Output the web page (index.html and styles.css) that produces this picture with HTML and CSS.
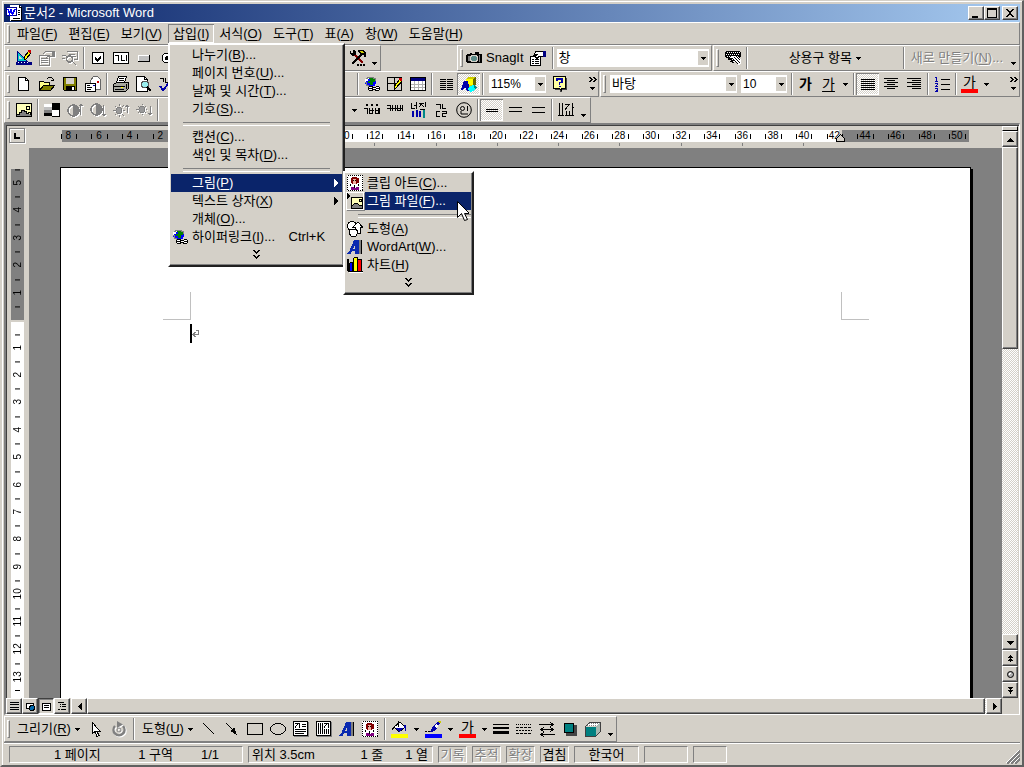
FILE: index.html
```html
<!DOCTYPE html>
<html lang="ko">
<head>
<meta charset="utf-8">
<title>문서2 - Microsoft Word</title>
<link rel="stylesheet" href="styles.css">
</head>
<body>
<svg class="defs" aria-hidden="true">
  <symbol id="caret" viewBox="0 0 5 3"><path d="M0 0h5v1H0zM1 1h3v1H1zM2 2h1v1H2z"/></symbol>
  <symbol id="chev" viewBox="0 0 7 10"><path d="M0 0h2v1h1v1h1V1h1V0h2v1H6v1H5v1H4v1H3V3H2V2H1V1H0zM0 5h2v1h1v1h1V6h1V5h2v1H6v1H5v1H4v1H3V8H2V7H1V6H0z"/></symbol>
  <symbol id="more" viewBox="0 0 8 14"><path d="M0 0h2v1h1v1h1v1H3v1H2v1H0V4h1V3h1V2H1V1H0zM4 0h2v1h1v1h1v1H7v1H6v1H4V4h1V3h1V2H5V1H4zM1 10h5v1H1zM2 11h3v1H2zM3 12h1v1H3z"/></symbol>
  <symbol id="globe" viewBox="0 0 16 16"><circle cx="6.500" cy="6" r="5.500" fill="#00f"/><path d="M5 1h4v2h2v3H9v3H6V7H4V5h2V3H5z" fill="#008000"/><path d="M1 3h2V1h2v2H4v2H2v2H1z" fill="#fff"/><path d="M1 6h1v3h2v2h3M2 2h1V1h6v1h2v3" fill="none" stroke="#808080"/><path d="M5 10h4v1h3v-1h3v1h1v3h-1v1h-4v-1H9v1H5v-1H4v-3h1z" fill="#000"/><path d="M5 11h3v1H5zM5 13h3v1H5zM12 11h3v1h-3zM12 13h3v1h-3zM9 12h3v1H9z" fill="#fff"/></symbol>
  <symbol id="wordart" viewBox="0 0 16 16"><path d="M7 1h5v13h1v1H8v-3H5l-1 3H0v-1l2-1zM8 6L6 10h2z" fill="#0a2ab0" fill-rule="evenodd"/><path d="M12 1h2v14h-2z" fill="#808080"/><path d="M14 1h1v14h-1z"/></symbol>
  <symbol id="clip" viewBox="0 0 16 16"><path d="M0 0h16v16H0z" fill="#fff"/><path d="M.5.500h15v15H.500z" fill="none" stroke="#000" stroke-dasharray="1 1"/><path d="M5 2h5v1h2v5h-2v1H5V8H4V3h1z" fill="#800000"/><path d="M6 4h3v5H6z" fill="#f0b0a0"/><path d="M4 12h3l1 1 1-1h3v3H4z" fill="#800080"/><path d="M6 5h1v1H6zM8 5h1v1H8zM3 9h1v2H3zM11 9h1v2h-1zM7 10h1v3H7z"/></symbol>
  <symbol id="pic" viewBox="0 0 16 16"><path d="M.5 1.500h15v13H.500z" fill="#ffffb8" stroke="#000"/><path d="M1 14v-2h2v-2h2V8h3v2h2v1h2v1h3v2z" fill="#808080"/><path d="M1 12h2v-2h2V8h3v1h2v2h2v-1h2v2h1M10 4h3v3h-3z" fill="none" stroke="#000"/></symbol>
  <symbol id="prop" viewBox="0 0 16 16"><path d="M.5 6.500h10v9H.500z" fill="#fff" stroke="#000"/><path d="M2 9h2v1H2zM5 9h4v1H5zM2 11h2v1H2zM5 11h4v1H5zM2 13h2v1H2zM5 13h4v1H5z"/><path d="M3.500 5.500L6 1.500h7v5h-4l-2 2-2-2 2-2z" fill="#fff" stroke="#000"/><path d="M13 1h3v6h-3z" fill="#000080"/></symbol>
  <symbol id="box3" viewBox="0 0 16 16"><path d="M.5 5.500h10v10H.500z" fill="#008080"/><path d="M1 5l4-4h10l-4 4z" fill="#fff"/><path d="M2 4h9M4 2h9" stroke="#808080" stroke-dasharray="1 1"/><path d="M11 5l4-4v9l-4 5z" fill="#a8b8b0"/><path d="M.5 5.500l4-4h11v9l-5 5H.500z" fill="none" stroke="#404040"/></symbol>
</svg>
<div class="window">
  <header class="title">
    <svg class="i" viewBox="0 0 16 16"><path d="M4 0h9l3 3v13H4z" fill="#fff"/><path d="M13 0h1v2h2v14H5v-1h10V3h-2zM12 5h2v1h-2zM12 7h2v1h-2zM12 9h2v1h-2zM7 13h7v1H7z"/><path d="M0 2h11v9H0z" fill="#fff"/><path d="M.5 2.500h10v8H.500z" fill="none" stroke="#00008b"/><path d="M2 4l1.500 5L5 5l1.500 4L9 4" stroke="#00f" stroke-width="1.500" fill="none"/></svg>
    <h1>문서2 - Microsoft Word</h1>
    <button class="cap" aria-label="최소화"><svg viewBox="0 0 10 10"><path d="M1 8h6v2H1z"/></svg></button>
    <button class="cap" aria-label="최대화"><svg viewBox="0 0 10 10"><path d="M0 0h10v10H0zM1 2v7h8V2z" fill-rule="evenodd"/></svg></button>
    <button class="cap close" aria-label="닫기"><svg viewBox="0 0 10 10"><path d="M1 1h2v1h1v1h2V2h1V1h2v1H8v1H7v1H6v2h1v1h1v1h1v1H7V8H6V7H4v1H3v1H1V8h1V7h1V6h1V4H3V3H2V2H1z"/></svg></button>
  </header>

  <nav class="band menubar">
    <i class="grip"></i>
    <button class="mi first">파일(<u>F</u>)</button>
    <button class="mi">편집(<u>E</u>)</button>
    <button class="mi">보기(<u>V</u>)</button>
    <div class="drop">
      <button class="mi open">삽입(<u>I</u>)</button>
      <ul class="menu">
        <li><button class="row">나누기(<u>B</u>)...</button></li>
        <li><button class="row">페이지 번호(<u>U</u>)...</button></li>
        <li><button class="row">날짜 및 시간(<u>T</u>)...</button></li>
        <li><button class="row">기호(<u>S</u>)...</button></li>
        <li class="line"></li>
        <li><button class="row">캡션(<u>C</u>)...</button></li>
        <li><button class="row">색인 및 목차(<u>D</u>)...</button></li>
        <li class="line"></li>
        <li class="parent"><button class="row on">그림(<u>P</u>)<svg class="arr" viewBox="0 0 4 8"><path d="M0 0l4 4-4 4z"/></svg></button>
          <ul class="menu sub">
            <li><button class="row"><svg class="i" viewBox="0 0 16 16"><use href="#clip"/></svg><span>클립 아트(<u>C</u>)...</span></button></li>
            <li><button class="row hot"><svg class="i lift" viewBox="0 0 16 16"><path d="M4.500 4.500h11v11h-11z" fill="#ffffb8" stroke="#000"/><path d="M5 15v-2l3-3h2l3 3 2-1v3z" fill="#808080"/><path d="M5 13l3-3h2l3 3 2-1M12 6h2v2h-2z" fill="none" stroke="#000"/><path d="M0 0l4 3-4 3z"/></svg><span>그림 파일(<u>F</u>)...</span></button>
              <svg class="cursor" viewBox="0 0 12 20"><path d="M.5.500v16l4-4 3 7 3-1-3-6h5z" fill="#fff" stroke="#000"/></svg></li>
            <li class="line"></li>
            <li><button class="row"><svg class="i" viewBox="0 0 16 16"><circle cx="5" cy="5" r="4.500" fill="#fff" stroke="#000"/><path d="M11 1l4.500 5H13v6H8V6H6z" fill="#fff" stroke="#000"/><path d="M3 8h6l2 3-2 4H4l-2-3z" fill="#fff" stroke="#000"/></svg><span>도형(<u>A</u>)</span></button></li>
            <li><button class="row"><svg class="i" viewBox="0 0 16 16"><use href="#wordart"/></svg><span>WordArt(<u>W</u>)...</span></button></li>
            <li><button class="row"><svg class="i" viewBox="0 0 16 16"><path d="M0 2h2v12h14v1H1v-1H0z"/><path d="M2 6l1-1h3v9H2zM6 1l1-1h4v14H6zM10 3l1-1h4v12h-5z"/><path d="M3 6h2v8H3z" fill="#00f"/><path d="M7 1h3v13H7z" fill="#ff0"/><path d="M11 3h3v11h-3z" fill="#f00"/><path d="M2 15h14v1H2z" fill="#fff"/></svg><span>차트(<u>H</u>)</span></button></li>
            <li><button class="row all" aria-label="확장"><svg class="chev" viewBox="0 0 7 10"><use href="#chev"/></svg></button></li>
          </ul>
        </li>
        <li><button class="row">텍스트 상자(<u>X</u>)<svg class="arr" viewBox="0 0 4 8"><path d="M0 0l4 4-4 4z"/></svg></button></li>
        <li><button class="row">개체(<u>O</u>)...</button></li>
        <li><button class="row ic"><svg class="i" viewBox="0 0 16 16"><use href="#globe"/></svg>하이퍼링크(<u>I</u>)...<kbd>Ctrl+K</kbd></button></li>
        <li><button class="row all" aria-label="확장"><svg class="chev" viewBox="0 0 7 10"><use href="#chev"/></svg></button></li>
      </ul>
    </div>
    <button class="mi">서식(<u>O</u>)</button>
    <button class="mi">도구(<u>T</u>)</button>
    <button class="mi">표(<u>A</u>)</button>
    <button class="mi">창(<u>W</u>)</button>
    <button class="mi">도움말(<u>H</u>)</button>
  </nav>

  <div class="bars">
    <div class="band forms">
      <i class="grip"></i>
      <button class="b" aria-label="디자인 모드"><svg class="i" viewBox="0 0 16 16"><path d="M1 1v10h10z" fill="#0cc" stroke="#000080"/><path d="M3 6v3h3z" fill="#d4d0c8"/><path d="M0 12h16v3H0z" fill="#000080"/><path d="M2 12h1v1H2zM5 12h1v1H5zM8 12h1v1H8zM11 12h1v1h-1z" fill="#fff"/><path d="M8 9V7l5-6 2 2-5 6z" fill="#ff0" stroke="#000"/><path d="M12 0h3v3h-2z" fill="#c00"/></svg></button>
      <button class="b" disabled aria-label="속성"><svg class="i dis" viewBox="0 0 16 16"><path d="M.5 5.500h10v10H.500zM2 8.500h7M2 10.500h7M2 12.500h7M4 4l3-3h6v5H9L7 8" fill="none" stroke="#808080"/><path d="M13 1h3v6h-3z" fill="#808080"/></svg></button>
      <button class="b" disabled aria-label="코드 보기"><svg class="i dis" viewBox="0 0 16 16"><path d="M4.500 1.500h11v8h-4M7 4h6M9 6h5M0 5h4M0 8h3M10 11l4 4" fill="none" stroke="#808080"/><circle cx="7.500" cy="9" r="3" fill="none" stroke="#808080" stroke-width="1.500"/></svg></button>
      <i class="sep"></i>
      <button class="b" aria-label="확인란"><svg class="i" viewBox="0 0 16 16"><path d="M2.500 2.500h11v11h-11z" fill="#fff" stroke="#000"/><path d="M5 7v3l2 2 4-4V5L7 9z"/></svg></button>
      <button class="b" aria-label="입력란"><svg class="i" viewBox="0 0 16 16"><path d="M.5 2.500h15v11H.500z" fill="#fff" stroke="#000"/><path d="M2 5.500h3.500V11M8.500 5v5.500h3M13.500 5v6" fill="none" stroke="#000"/></svg></button>
      <button class="b" aria-label="명령 단추"><svg class="i" viewBox="0 0 16 16"><path d="M2 5h12v7H2z" fill="#c0c0c0"/><path d="M2 5h12v1H3v6H2z" fill="#fff"/><path d="M13 5h1v7H2v-1h11z"/></svg></button>
      <button class="b" aria-label="옵션 단추"><svg class="i" viewBox="0 0 16 16"><circle cx="8" cy="8" r="5" fill="#fff" stroke="#000"/><circle cx="8" cy="8" r="2"/></svg></button>
      <button class="b end" aria-label="추가 컨트롤"><svg class="i" viewBox="0 0 16 16"><path d="M4 4l9 9" stroke="#800000" stroke-width="2"/><path d="M11 5L2 14" stroke="#000" stroke-width="2"/><path d="M0 1h1v2h2V0h1l2 2v3H4v1H2L0 4zM7 1l2-1h4l3 3v4h-2V5h-3L9 3z"/><path d="M9 1h3l2 2h-3z" fill="#cc0"/><path d="M7 14h2v2H7zM10 14h2v2h-2zM13 14h2v2h-2z"/></svg></button>
      <button class="c low" aria-label="옵션"><svg viewBox="0 0 5 3"><use href="#caret"/></svg></button>
    </div>
    <div class="band snag">
      <i class="grip"></i>
      <button class="t"><svg class="i" viewBox="0 0 16 16"><path d="M1 4h3V3h2v1h3V2h4v2h2l1 1v8H1L0 12V5z"/><circle cx="8" cy="8.500" r="3.500" fill="#5a8a88" stroke="#d4d0c8"/><path d="M2 6h2v5H2zM13 5h1v7h-1z" fill="#808080"/></svg> SnagIt</button>
      <button class="b" aria-label="속성"><svg class="i" viewBox="0 0 16 16"><use href="#prop"/></svg></button>
      <i class="sep"></i>
      <label class="combo grow"><select aria-label="입력"><option>창</option></select><i class="dd"><svg viewBox="0 0 5 3"><use href="#caret"/></svg></i></label>
    </div>
    <div class="band auto">
      <i class="grip"></i>
      <button class="b" aria-label="상용구"><svg class="i" viewBox="0 0 16 16"><path d="M1 1h14v1h1v5h-1v1H1V7H0V2h1z"/><path d="M2 2.500h13M1 4.500h13M2 6.500h6" stroke="#fff" stroke-dasharray="1 1"/><path d="M4 8l3-2h5l4 4v4l-3 1-3-3-2 1z" fill="#fff"/><path d="M3 8.500h5l-3 1 3 1-2 1 3 1M9 7l6 6M8 9l5 5M11 6l4 4" fill="none" stroke="#000"/></svg></button>
      <i class="sep"></i>
      <button class="t grow">상용구 항목 <svg class="cr" viewBox="0 0 5 3"><use href="#caret"/></svg></button>
      <i class="sep"></i>
      <button class="t off" disabled>새로 만들기(<u>N</u>)...</button>
      <button class="c low" aria-label="옵션"><svg viewBox="0 0 5 3"><use href="#caret"/></svg></button>
    </div>
  </div>

  <div class="bars">
    <div class="band std">
      <i class="grip"></i>
      <button class="b" aria-label="새 문서"><svg class="i" viewBox="0 0 16 16"><path d="M2.500 1.500h7l3 3v10h-10z" fill="#fff" stroke="#000"/><path d="M9.500 1.500v3h3" fill="none" stroke="#000"/></svg></button>
      <button class="b" aria-label="열기"><svg class="i" viewBox="0 0 16 16"><path d="M.5 13.500v-8h4l1 1h5v3" fill="#ff8" stroke="#000"/><path d="M.5 14.500l4-5h11l-4 5z" fill="#808000" stroke="#000"/><path d="M8 3l2-2h2l2 2v2M12 4h3" fill="none" stroke="#000"/></svg></button>
      <button class="b" aria-label="저장"><svg class="i" viewBox="0 0 16 16"><path d="M1.500 1.500h13v13h-12l-1-1z" fill="#808000" stroke="#000"/><path d="M4 2h8v6H4z" fill="#d4d0c8"/><path d="M4 10h9v5H4z"/><path d="M10 11h2v3h-2z" fill="#fff"/></svg></button>
      <button class="b" aria-label="전자 메일"><svg class="i" viewBox="0 0 16 16"><path d="M5.500 4.500l3-4h4l3 3v10h-9z" fill="#fff" stroke="#666"/><path d="M.5 7.500h10v8H.500z" fill="#fff" stroke="#000"/><path d="M2 9h3v1H2zM2 11h5v1H2zM2 13h4v1H2z"/><path d="M12 5h2v2h-2z" fill="#c00"/><path d="M8 9h2v1H8z" fill="#00a"/></svg></button>
      <i class="sep"></i>
      <button class="b" aria-label="인쇄"><svg class="i" viewBox="0 0 16 16"><path d="M5.500.500h8l-2 6h-8z" fill="#fff" stroke="#000"/><path d="M6 2.500h5M5.500 4.500h5" stroke="#000"/><path d="M.5 8.500l3-2h12v6l-3 3h-12z" fill="#a8a8a0" stroke="#000"/><path d="M1 10h11v1H1zM2 13h9v1H2zM13 8h1v5h-1z"/><path d="M8 11h2v1H8z" fill="#ff0"/></svg></button>
      <button class="b" aria-label="미리 보기"><svg class="i" viewBox="0 0 16 16"><path d="M.5.500h8l3 3v12H.500z" fill="#fff" stroke="#000"/><path d="M8.500.500v3h3" fill="none" stroke="#000"/><circle cx="9" cy="8.500" r="3.500" fill="#9ee" stroke="#555"/><path d="M11 11l4 4" stroke="#000" stroke-width="2"/></svg></button>
      <button class="b" aria-label="맞춤법"><svg class="i" viewBox="0 0 16 16"><path d="M1 2h3v4M6 2v4h3" fill="none" stroke="#000"/><path d="M1 10l3 4 6-7" fill="none" stroke="#00a" stroke-width="2"/></svg></button>
      <i class="sep end"></i>
      <button class="b" aria-label="하이퍼링크"><svg class="i" viewBox="0 0 16 16"><use href="#globe"/></svg></button>
      <button class="b" aria-label="표 및 테두리"><svg class="i" viewBox="0 0 16 16"><path d="M.5 1.500h14v13H.500zM.5 7.500h14M7.500 1.500v13" fill="none" stroke="#000"/><path d="M7 13v-2l6-8 2 2-6 7z" fill="#ff0" stroke="#000"/><path d="M12 2h3v3h-2z" fill="#c00"/></svg></button>
      <button class="b" aria-label="표 삽입"><svg class="i" viewBox="0 0 16 16"><path d="M.5 1.500h15v13H.500z" fill="#fff" stroke="#000"/><path d="M1 2h14v3H1z" fill="#000080"/><path d="M1 8.500h14M1 11.500h14M4.500 5v9M8.500 5v9M12.500 5v9" stroke="#b0b0b0"/></svg></button>
      <i class="sep"></i>
      <button class="b" aria-label="단"><svg class="i" viewBox="0 0 16 16"><path d="M2 3.500h6M2 5.500h6M2 7.500h6M2 9.500h6M2 11.500h6M2 13.500h6M9 3.500h6M9 5.500h6M9 7.500h6M9 9.500h6M9 11.500h6M9 13.500h6" stroke="#000"/></svg></button>
      <button class="b pressed" aria-label="그리기"><svg class="i" viewBox="0 0 16 16"><path d="M5 3l2-2h8v8l-3 2H5z" fill="#cc0"/><path d="M5 3h7v6H5z" fill="#ff0"/><path d="M12 3l3-2v8l-3 2z" fill="#660"/><path d="M0 14L3 5h4l2 10H6l-1-3H3l-1 2z" fill="#00a"/><path d="M8 11l4-2 4 2-2 3-4 2-3-2z" fill="#0ff"/><path d="M13 9l3 2-2 3z" fill="#088"/></svg></button>
      <i class="sep"></i>
      <label class="combo zoom"><select aria-label="확대/축소"><option>115%</option></select><i class="dd"><svg viewBox="0 0 5 3"><use href="#caret"/></svg></i></label>
      <button class="b help" aria-label="도움말"><svg class="i" viewBox="0 0 16 16"><path d="M3 2h12v12h-5v2H8v-2H3z" fill="#444"/><path d="M1.500.500h12v12h-4v2l-2-2h-6z" fill="#ffffa0" stroke="#000"/><path d="M5 5V3h5v3L7.500 7v2M7 10.500h2" fill="none" stroke="#00a" stroke-width="1.500"/></svg></button>
      <button class="c more" aria-label="기타"><svg viewBox="0 0 8 14"><use href="#more"/></svg></button>
    </div>
    <div class="band fmt">
      <i class="grip"></i>
      <label class="combo grow"><select aria-label="글꼴"><option>바탕</option></select><i class="dd"><svg viewBox="0 0 5 3"><use href="#caret"/></svg></i></label>
      <label class="combo size"><select aria-label="글꼴 크기"><option>10</option></select><i class="dd"><svg viewBox="0 0 5 3"><use href="#caret"/></svg></i></label>
      <i class="sep"></i>
      <button class="b g"><b>가</b></button>
      <button class="b g"><u>가</u></button>
      <button class="c" aria-label="밑줄 종류"><svg viewBox="0 0 5 3"><use href="#caret"/></svg></button>
      <i class="sep"></i>
      <button class="b pressed" aria-label="양쪽 맞춤"><svg class="i" viewBox="0 0 16 16"><path d="M1 3.500h14M1 5.500h14M1 7.500h14M1 9.500h14M1 11.500h14M1 13.500h14" stroke="#000"/></svg></button>
      <button class="b" aria-label="가운데 맞춤"><svg class="i" viewBox="0 0 16 16"><path d="M1 2.500h14M4 4.500h8M1 6.500h14M4 8.500h8M1 10.500h14M4 12.500h8" stroke="#000"/></svg></button>
      <button class="b" aria-label="오른쪽 맞춤"><svg class="i" viewBox="0 0 16 16"><path d="M1 2.500h14M6 4.500h9M1 6.500h14M6 8.500h9M1 10.500h14M6 12.500h9" stroke="#000"/></svg></button>
      <i class="sep"></i>
      <button class="b" aria-label="번호 매기기"><svg class="i" viewBox="0 0 16 16"><path d="M7 3.500h9M7 8.500h9M7 13.500h9" stroke="#000"/><path d="M1 1.500h1.500V5M1 5.500h3M1 7.500h2.500v1L1.500 10.500H4M1 12.500h2.500v3H1M1.500 14H3" fill="none" stroke="#00a"/></svg></button>
      <i class="sep"></i>
      <button class="b g ink red">가</button>
      <button class="c" aria-label="글꼴 색"><svg viewBox="0 0 5 3"><use href="#caret"/></svg></button>
      <button class="c more" aria-label="기타"><svg viewBox="0 0 8 14"><use href="#more"/></svg></button>
    </div>
  </div>

  <div class="bars">
    <div class="band pics">
      <i class="grip"></i>
      <button class="b" aria-label="그림 삽입"><svg class="i" viewBox="0 0 16 16"><use href="#pic"/></svg></button>
      <i class="sep"></i>
      <button class="b" aria-label="그림 조절"><svg class="i" viewBox="0 0 16 16"><path d="M0 2h8v3H0z" fill="#fff"/><path d="M0 5h8v3H0z" fill="#c0c0c0"/><path d="M0 8h8v3H0z" fill="#808080"/><path d="M0 11h8v3H0zM8 1h8v7H8z"/><path d="M8 8h7v6H8z" fill="#fff"/><path d="M15 8h1v7H8v-1h7z"/></svg></button>
      <button class="b" disabled aria-label="선명하게"><svg class="i dis" viewBox="0 0 16 16"><circle cx="6.500" cy="8.500" r="5.500" fill="none" stroke="#808080" stroke-width="1.500"/><path d="M6 3a5 5 0 0 1 0 11zM13 4h1v9h-1zM11 4h5l-2-3z" fill="#808080"/></svg></button>
      <button class="b" disabled aria-label="희미하게"><svg class="i dis" viewBox="0 0 16 16"><circle cx="6.500" cy="7.500" r="5.500" fill="none" stroke="#808080" stroke-width="1.500"/><path d="M6 2a5 5 0 0 1 0 11zM13 3h1v9h-1zM11 12h5l-2 3z" fill="#808080"/></svg></button>
      <button class="b" disabled aria-label="밝게"><svg class="i dis" viewBox="0 0 16 16"><circle cx="6" cy="8.500" r="3" fill="#999" stroke="#808080"/><path d="M6 2v2M6 13v2M0 8.500h2M10 8.500h2M2 4l1 1M9 5l2-2M2 13l1-1M9 12l2 2M14 4v7" stroke="#808080"/><path d="M11 5h5l-2-3z" fill="#808080"/></svg></button>
      <button class="b" disabled aria-label="어둡게"><svg class="i dis" viewBox="0 0 16 16"><circle cx="6" cy="7.500" r="3" fill="#999" stroke="#808080"/><path d="M6 2v1M6 12v1M0 7.500h2M10 7.500h1M2 4l1 1M9 5l1-1M2 11l1-1M9 10l1 1M14 4v7" stroke="#808080"/><path d="M11 11h5l-2 3z" fill="#808080"/></svg></button>
      <i class="sep"></i>
      <button class="c end" aria-label="선택"><svg viewBox="0 0 5 3"><use href="#caret"/></svg></button>
      <button class="b" aria-label="강조점"><svg class="i" viewBox="0 0 16 16"><path d="M2 2h2v2H2zM7 2h2v2H7zM12 2h2v2h-2z"/><path d="M0 6.500h3.500V12M5.500 6v5M5.500 8.500h4M8.500 6v5.500H5M11.500 6v5.500h3V6M11.500 8.500h3M15.500 6v6" fill="none" stroke="#000"/></svg></button>
      <button class="b" aria-label="취소선"><svg class="i" viewBox="0 0 16 16"><path d="M0 3.500h3.500V9M5.500 3v6M5.500 6h3M8.500 3v6M10.500 3v5.500h3V3M15.500 3v6M0 6.500h16" fill="none" stroke="#000"/></svg></button>
      <button class="b" aria-label="윗주"><svg class="i" viewBox="0 0 16 16"><path d="M1.500 1v5h3M6.500 0v7M4 3.500h3M9 1.500h5M11.500 2L9 5M12 3l2 2M15.500 0v5M10 7.500h5" fill="none" stroke="#000"/><path d="M2.500 9v6M6.500 8v7M10 9v6" stroke="#00a" stroke-width="2"/><path d="M13.500 8v8" stroke="#088" stroke-width="2"/></svg></button>
      <button class="b" aria-label="글자 균등"><svg class="i" viewBox="0 0 16 16"><path d="M3 2.500h4.500V7M9.500 2v4.500H13M7 9.500H3.500v5H7M9 9.500h4v2H9.500v3H13" fill="none" stroke="#000"/></svg></button>
      <button class="b" aria-label="원 문자"><svg class="i round" viewBox="0 0 16 16"><circle cx="8" cy="8" r="7.300" fill="none" stroke="#000"/><circle cx="6.500" cy="6.500" r="2" fill="none" stroke="#000"/><path d="M11.500 4v5M5 9v3h7" fill="none" stroke="#000"/></svg></button>
      <i class="sep"></i>
      <button class="b pressed" aria-label="가로 선 1"><svg class="i" viewBox="0 0 16 16"><path d="M2 7h12v1H2zM2 9h12v1H2z"/></svg></button>
      <button class="b" aria-label="가로 선 2"><svg class="i" viewBox="0 0 16 16"><path d="M2 5.500h13M2 9.500h13" stroke="#000"/></svg></button>
      <button class="b" aria-label="가로 선 3"><svg class="i" viewBox="0 0 16 16"><path d="M2 5.500h13M2 10.500h13" stroke="#000"/></svg></button>
      <i class="sep"></i>
      <button class="b" aria-label="텍스트 방향"><svg class="i" viewBox="0 0 16 16"><path d="M1.500 1v13M4.500 1v13M7 2.500h4L7 8M8.500 9v5M11.500 9v5M14.500 1v13M14 5h2M0 13h3M3 13h3M7 13h3M10 13h3M13 13h3" fill="none" stroke="#000"/></svg></button>
      <button class="c low" aria-label="옵션"><svg viewBox="0 0 5 3"><use href="#caret"/></svg></button>
    </div>
  </div>

  <main class="doc">
    <div class="corner"><button class="tab" aria-label="탭 종류"><svg viewBox="0 0 6 6"><path d="M0 0h2v4h4v2H0z"/></svg></button></div>
    <div class="hrule">
      <div class="hcells">
        <i>8</i><i>6</i><i>4</i><i>2</i><i></i><i></i><i class="d"></i><i></i><i class="d"></i><i>10</i><i class="d">12</i><i>14</i><i class="d">16</i><i>18</i><i class="d">20</i><i>22</i><i class="d">24</i><i>26</i><i class="d">28</i><i>30</i><i class="d">32</i><i>34</i><i class="d">36</i><i>38</i><i class="d">40</i><i>42<svg class="indent" viewBox="0 0 9 8"><path d="M.5 7.500v-3l4-4 4 4v3z" fill="#d4d0c8" stroke="#000"/></svg></i><i>44</i><i>46</i><i>48</i><i>50</i>
      </div>
    </div>
    <div class="vscroll">
      <button class="split" aria-label="나누기"></button>
      <button class="sb" aria-label="위로"><svg viewBox="0 0 7 4"><path d="M3 0h1v1h1v1h1v1h1v1H0V3h1V2h1V1h1z"/></svg></button>
      <div class="track"><div class="thumb"></div></div>
      <button class="sb" aria-label="아래로"><svg viewBox="0 0 7 4"><path d="M0 0h7v1H6v1H5v1H4v1H3V3H2V2H1V1H0z"/></svg></button>
      <button class="sb" aria-label="이전 페이지"><svg viewBox="0 0 7 7"><path d="M3 0h1v1h1v1h1v1H4v1h1v1h1v1H4v1H3V6H1V5h1V4h1V3H1V2h1V1h1z"/></svg></button>
      <button class="sb" aria-label="찾을 개체"><svg class="round" viewBox="0 0 7 7"><circle cx="3.500" cy="3.500" r="3" fill="#b0b0b0" stroke="#000"/><path d="M2 2h2v1H3v1H2z" fill="#fff"/></svg></button>
      <button class="sb" aria-label="다음 페이지"><svg viewBox="0 0 7 7"><path d="M1 0h5v1H5v1H4v1h2v1H5v1H4v2H3V5H2V4H1V3h2V2H2V1H1z"/></svg></button>
    </div>
    <div class="vrule"><div class="vcells">
      <i>5</i><i>4</i><i>3</i><i>2</i><i>1</i><i></i><i>1</i><i>2</i><i>3</i><i>4</i><i>5</i><i>6</i><i>7</i><i>8</i><i>9</i><i>10</i><i>11</i><i>12</i><i>13</i><i class="last"></i>
    </div></div>
    <div class="desk">
      <article class="page">
        <div class="marks"><i class="ml"></i><i class="mr"></i></div>
        <p class="para"><i class="ibeam"></i><svg viewBox="0 0 7 7"><path d="M6.500 0v4.500H1M3.500 2L1 4.500 3.500 7M4 .5h2" fill="none" stroke="#808080"/></svg></p>
      </article>
    </div>
    <div class="hscroll">
      <button class="sb view" aria-label="기본 보기"><svg viewBox="0 0 9 9"><path d="M0 .5h9M0 2.500h9M0 5.500h9M0 7.500h9" stroke="#000"/></svg></button>
      <button class="sb view" aria-label="웹 모양"><svg viewBox="0 0 9 9"><path d="M.5 1.500h7v5h-7z" fill="#fff" stroke="#000"/><circle cx="6" cy="6" r="2.500" fill="#06a" stroke="#000"/></svg></button>
      <button class="sb view in" aria-label="인쇄 모양"><svg viewBox="0 0 9 9"><path d="M.5 1.500h8v7h-8z" fill="#fff" stroke="#000"/><path d="M2 3.500h5M2 5.500h5" stroke="#000"/></svg></button>
      <button class="sb view" aria-label="개요"><svg viewBox="0 0 9 9"><path d="M0 .5h6M2 2.500h1M4 2.500h4M2 4.500h1M4 4.500h4M0 7.500h2M3 7.500h5" stroke="#000"/></svg></button>
      <button class="sb" aria-label="왼쪽"><svg viewBox="0 0 4 7"><path d="M4 0v7H3V6H2V5H1V4H0V3h1V2h1V1h1V0z"/></svg></button>
      <div class="htrack"><div class="hthumb"></div></div>
      <button class="sb" aria-label="오른쪽"><svg viewBox="0 0 4 7"><path d="M0 0v7h1V6h1V5h1V4h1V3H3V2H2V1H1V0z"/></svg></button>
    </div>
  </main>

  <div class="bars foot">
    <div class="band draw">
      <i class="grip"></i>
      <button class="t">그리기(<u>R</u>) <svg class="cr" viewBox="0 0 5 3"><use href="#caret"/></svg></button>
      <button class="b" aria-label="개체 선택"><svg class="i" viewBox="0 0 16 16"><path d="M4.500 1.500v11l2.500-2 2 5 2-1-2-4h3z" fill="#fff" stroke="#000"/></svg></button>
      <button class="b" disabled aria-label="회전"><svg class="i dis round" viewBox="0 0 16 16"><path d="M4 5a5.500 5.500 0 1 0 8 0" fill="none" stroke="#808080" stroke-width="2.500"/><circle cx="8" cy="9" r="2" fill="none" stroke="#808080"/><path d="M6 0l6 3.500-6 3.500z" fill="#808080"/></svg></button>
      <i class="sep"></i>
      <button class="t">도형(<u>U</u>) <svg class="cr" viewBox="0 0 5 3"><use href="#caret"/></svg></button>
      <button class="b" aria-label="선"><svg class="i" viewBox="0 0 16 16"><path d="M2 2l11 11" stroke="#000"/></svg></button>
      <button class="b" aria-label="화살표"><svg class="i" viewBox="0 0 16 16"><path d="M2 2l8 8" stroke="#000"/><path d="M13 14l-7-4 4-4z"/></svg></button>
      <button class="b" aria-label="직사각형"><svg class="i" viewBox="0 0 16 16"><path d="M.5 2.500h15v11H.500z" fill="none" stroke="#000"/></svg></button>
      <button class="b" aria-label="타원"><svg class="i" viewBox="0 0 16 16"><ellipse cx="8" cy="8" rx="7.500" ry="5.500" fill="none" stroke="#000"/></svg></button>
      <button class="b" aria-label="텍스트 상자"><svg class="i" viewBox="0 0 16 16"><path d="M1 1h15v15H1z" fill="#808080"/><path d="M.5.500h14v14H.500z" fill="#fff" stroke="#000"/><path d="M2 2.500h3L2 6.500M6.500 2v5M9 3.500h4M9 5.500h4M2 8.500h11M2 10.500h11M2 12.500h9" fill="none" stroke="#000"/></svg></button>
      <button class="b" aria-label="세로 텍스트 상자"><svg class="i" viewBox="0 0 16 16"><path d="M1 1h15v15H1z" fill="#808080"/><path d="M.5.500h14v14H.500z" fill="#fff" stroke="#000"/><path d="M2.500 2v11M4.500 2v11M6.500 2v11M8 2.500h3L8 6.500M12.500 2v5M8.500 8v5M10.500 8v5M12.500 8v5" fill="none" stroke="#000"/></svg></button>
      <button class="b" aria-label="WordArt"><svg class="i" viewBox="0 0 16 16"><use href="#wordart"/></svg></button>
      <button class="b" aria-label="클립 아트"><svg class="i" viewBox="0 0 16 16"><use href="#clip"/></svg></button>
      <i class="sep"></i>
      <button class="b ink yellow" aria-label="채우기 색"><svg class="i" viewBox="0 0 16 14"><path d="M3 7l6-5 5 5-6 5z" fill="#fff" stroke="#000"/><path d="M4 8h9l-5 4z" fill="#00a"/><path d="M7.500 1v6M2.500 7l-1 3" stroke="#000"/><path d="M13 5h2v6h-1z" fill="#00a"/></svg></button>
      <button class="c" aria-label="채우기"><svg viewBox="0 0 5 3"><use href="#caret"/></svg></button>
      <button class="b ink blue" aria-label="선 색"><svg class="i" viewBox="0 0 16 14"><path d="M0 11h2v1H0zM3 11h2v1H3z"/><path d="M5 12l2-4 6-7h2v2l-5 8z" fill="#00a"/><path d="M9 6l2-2 2 2-2 2z" fill="#fff"/><path d="M13 1h3v2h-2z" fill="#cc0"/></svg></button>
      <button class="c" aria-label="선"><svg viewBox="0 0 5 3"><use href="#caret"/></svg></button>
      <button class="b g ink red">가</button>
      <button class="c" aria-label="글꼴 색"><svg viewBox="0 0 5 3"><use href="#caret"/></svg></button>
      <button class="b" aria-label="선 스타일"><svg class="i" viewBox="0 0 16 16"><path d="M0 3h16v1H0zM0 6h16v2H0zM0 10h16v3H0z"/></svg></button>
      <button class="b" aria-label="대시 스타일"><svg class="i" viewBox="0 0 16 16"><path d="M0 3.500h16" stroke="#000" stroke-dasharray="1 1"/><path d="M0 6.500h16M0 12.500h16" stroke="#000" stroke-dasharray="3 1"/><path d="M0 9.500h16" stroke="#000" stroke-dasharray="2 1"/></svg></button>
      <button class="b" aria-label="화살표 스타일"><svg class="i" viewBox="0 0 16 16"><path d="M0 3.500h14M2 8.500h12M2 13.500h14M11 1l3 2.500L11 6M5 6L2 8.500 5 11M11 6l3 2.500-3 2.500M5 11l-3 2.500L5 16" fill="none" stroke="#000"/></svg></button>
      <button class="b" aria-label="그림자"><svg class="i" viewBox="0 0 16 16"><path d="M4 4h11v11H4z" fill="#444"/><path d="M2.500 2.500h9v9h-9z" fill="#008080" stroke="#000"/></svg></button>
      <button class="b" aria-label="3차원"><svg class="i" viewBox="0 0 16 16"><use href="#box3"/></svg></button>
      <button class="c low" aria-label="옵션"><svg viewBox="0 0 5 3"><use href="#caret"/></svg></button>
    </div>
  </div>
  <footer class="status">
    <div class="pane p1"><span>1 페이지</span><span class="sec">1 구역</span><span>1/1</span></div>
    <div class="pane p2"><span class="pos">위치 3.5cm</span><span>1 줄</span><span>1 열</span></div>
    <div class="pane s off">기록</div>
    <div class="pane s off">추적</div>
    <div class="pane s off">확장</div>
    <div class="pane s">겹침</div>
    <div class="pane lang">한국어</div>
    <div class="pane e1"></div>
    <div class="pane e2"></div>
    <svg class="size" viewBox="0 0 14 14"><path d="M1 14L14 1M5 14l9-9M9 14l5-5" stroke="#808080" stroke-width="2"/><path d="M0 13L13 0M4 13l9-9M8 13l5-5" stroke="#fff"/></svg>
  </footer>
</div>
</body>
</html>
```

FILE: styles.css
```css
* { box-sizing: border-box; }

:root {
  --face: #d4d0c8;
  --shade: #808080;
  --dark: #404040;
  --navy: #0a246a;
  --dither: repeating-conic-gradient(#fff 0 25%, #d4d0c8 0 50%) 0 0 / 2px 2px;
}

body {
  margin: 0;
  background: var(--face);
  color: #000;
  font: 13px/16px "Liberation Sans", "Noto Sans CJK KR", sans-serif;
}

button, select, kbd { font: inherit; color: inherit; }
button { border: 0; padding: 0; margin: 0; background: none; white-space: nowrap; }
ul { list-style: none; margin: 0; padding: 0; }
i { font-style: normal; }
svg { display: block; flex: none; shape-rendering: crispEdges; }
.defs { position: absolute; width: 0; height: 0; }
.i { width: 16px; height: 16px; }
.round { shape-rendering: auto; }
.dis { filter: drop-shadow(1px 1px 0 #fff); }
u { text-underline-offset: 2px; text-decoration-thickness: 1px; }

.window {
  display: flex;
  flex-direction: column;
  height: 100vh;
  padding: 3px 2px 0 2px;
  border: 1px solid var(--dark);
  border-width: 1px 2px 2px;
  border-color: var(--face) #606060 #606060 var(--face);
  box-shadow: inset 1px 1px 0 #fff;
}

/* title bar */
.title {
  display: flex;
  align-items: center;
  flex: none;
  height: 18px;
  padding: 0 2px;
  background: linear-gradient(90deg, var(--navy), #a6caf0);
  color: #fff;
}
.title h1 { flex: 1; margin: 0 0 0 2px; font-size: 13px; font-weight: 400; line-height: 18px; }
.cap, .sb, .thumb, .hthumb {
  background: var(--face);
  border: 1px solid;
  border-color: #fff var(--dark) var(--dark) #fff;
  box-shadow: inset -1px -1px 0 var(--shade);
}
.cap { display: flex; align-items: center; justify-content: center; width: 16px; height: 14px; }
.cap svg { width: 10px; height: 10px; }
.close { margin-left: 2px; }

/* command bars */
.bars { display: flex; flex: none; gap: 1px; height: 26px; }
.band {
  display: flex;
  flex: none;
  align-items: center;
  height: 26px;
  border: 1px solid;
  border-color: #fff var(--shade) var(--shade) #fff;
}
.grip { flex: none; width: 3px; height: 18px; margin: 0 2px; border: 1px solid; border-color: #fff var(--shade) var(--shade) #fff; }
.sep { flex: none; width: 2px; height: 22px; margin: 0 1px 0 2px; border-left: 1px solid var(--shade); border-right: 1px solid #fff; }
.menubar { gap: 1px; height: 23px; }
.first { margin-left: -1px; }
.mi { height: 19px; padding: 0 5px; line-height: 19px; }
.open { box-shadow: inset 1px 1px 0 var(--shade), inset -1px -1px 0 #fff; }
.drop { position: relative; margin-right: -1px; }

.b { display: flex; flex: none; flex-direction: column; align-items: center; justify-content: center; width: 23px; height: 22px; }
.c { display: flex; flex: none; align-items: center; justify-content: center; width: 11px; height: 22px; }
.c svg, .cr, .dd svg { width: 5px; height: 3px; }
.low { align-items: flex-end; padding-bottom: 4px; }
.t { display: flex; align-items: center; justify-content: center; gap: 4px; height: 22px; padding: 0 5px; }
.t u { margin: 0 -4px; }
.end { margin-left: auto; }
.grow { flex: 1; }
.pressed { background: var(--dither); box-shadow: inset 1px 1px 0 var(--shade), inset -1px -1px 0 #fff; }
.more svg { width: 8px; height: 14px; }
.g { font-size: 14px; line-height: 16px; }
.ink { justify-content: flex-start; width: 17px; height: 18px; margin: 0 3px; border-bottom: 4px solid; line-height: 14px; }
.ink .i { height: 14px; }
.red { border-color: #f00; }
.yellow { border-color: #ff0; }
.blue { border-color: #00f; }
.off, .s.off { color: var(--shade); text-shadow: 1px 1px 0 #fff; }

.combo { display: flex; align-items: center; height: 18px; margin: 0 2px; background: #fff; }
.combo select { flex: 1; min-width: 0; height: 18px; padding: 0 2px; border: 0; background: none; appearance: none; font-size: 13px; line-height: 16px; }
.dd { display: flex; flex: none; align-items: center; justify-content: center; width: 10px; height: 14px; margin-right: 1px; background: var(--face); }
.zoom { width: 57px; margin-left: 4px; }
.zoom select, .size select { font-size: 12px; }
.size { width: 46px; }

.forms { width: 377px; }
.snag { width: 255px; margin-left: auto; }
.snag .t { padding: 0 3px 0 1px; }
.auto { width: 307px; }
.auto .t.off { display: block; }
.off u { margin: 0; }
.std { width: 595px; }
.std .help { margin-right: 16px; }
.fmt { flex: 1; }
.fmt .more { margin-left: 16px; }
.pics { width: 587px; }
.pics .low { width: 13px; }

/* menus */
.menu {
  position: absolute;
  z-index: 5;
  top: 19px;
  left: 0;
  width: 177px;
  padding: 1px;
  background: var(--face);
  border: 2px solid;
  border-color: #fff #202020 #202020 #fff;
  box-shadow: inset -1px -1px 0 var(--shade);
}
.row { display: flex; align-items: center; width: 100%; height: 18px; padding-left: 21px; line-height: 18px; }
.row .arr { width: 4px; height: 8px; margin: 0 4px 0 auto; fill: currentColor; }
.row.ic { padding-left: 1px; }
.ic .i { margin-right: 4px; }
.row kbd { margin: 0 17px 0 auto; }
.all { justify-content: center; padding: 0; }
.chev { width: 7px; height: 10px; }
.line { height: 10px; padding: 4px 12px; }
.line::before { content: ""; display: block; height: 2px; border-top: 1px solid var(--shade); border-bottom: 1px solid #fff; }
.on, .hot span { background: var(--navy); color: #fff; }
.parent, .sub li { position: relative; }
.sub { top: -3px; left: 172px; width: 131px; }
.sub .row { padding: 0; }
.sub .i { margin: 0 1px; }
.sub .row span { flex: 1; margin-left: 1px; padding-left: 2px; text-align: left; }
.sub .line { padding-right: 0; }
.lift { box-shadow: 0 0 0 1px #fff, 1px 1px 0 1px var(--shade); }
.cursor { position: absolute; z-index: 6; top: 9px; left: 111px; width: 12px; height: 20px; shape-rendering: auto; }

/* document area */
.doc {
  display: grid;
  flex: 1;
  grid-template: 23px minmax(0, 1fr) 16px / 23px minmax(0, 1fr) 16px;
  min-height: 0;
  padding-right: 1px;
  border: 2px solid;
  border-color: var(--shade) #fff #fff var(--shade);
  border-right-width: 1px;
  border-bottom-width: 1px;
  box-shadow: inset 1px 1px 0 var(--dark);
}
.corner { padding: 3px; }
.tab { display: flex; align-items: center; justify-content: center; width: 16px; height: 15px; border: 1px solid var(--shade); box-shadow: inset 1px 1px 0 #fff, 1px 1px 0 #fff; }
.tab svg { width: 6px; height: 6px; }
.hrule { padding: 5px 30px 0 24px; }
.hcells {
  display: flex;
  height: 12px;
  background: linear-gradient(90deg, transparent 1%, var(--shade) 1% 14.9%, #fff 14.9% 85.5%, transparent 85.5% 85.9%, var(--shade) 85.9% 99.7%, transparent 99.7%);
  font-size: 10px;
  line-height: 12px;
}
.hcells i { position: relative; flex: 1 1 0; text-align: center; }
.hcells i::before, .hcells i::after { content: ""; position: absolute; top: 4px; left: 25%; width: 1px; height: 5px; background: #000; }
.hcells i::after { left: 75%; }
.d { height: 16px; background: linear-gradient(var(--shade), var(--shade)) center bottom / 1px 3px no-repeat; }
.indent { position: absolute; top: 4px; left: 17px; z-index: 1; width: 9px; height: 8px; }

.vrule { grid-row: 2; grid-column: 1; padding: 21px 5px 0; }
.vcells {
  display: flex;
  flex-direction: column;
  height: 100%;
  background: linear-gradient(var(--shade) 151px, var(--face) 151px 153px, #fff 153px);
  font-size: 10px;
  line-height: 13px;
}
.vcells i { position: relative; flex: 1 1 0; width: 13px; writing-mode: vertical-rl; transform: rotate(180deg); text-align: center; }
.vcells i::after { content: ""; position: absolute; bottom: 0; left: 4px; width: 5px; height: 1px; background: #000; }
.vcells .last { flex: 0 0 8px; }

.desk { grid-row: 2; grid-column: 2; overflow: hidden; padding: 19px 31px 0; background: var(--shade); }
.page { height: 100%; background: #fff; border: 1px solid #000; border-bottom: 0; box-shadow: 2px 2px 0 #000; }
.marks { display: flex; justify-content: space-between; padding: 124px 101px 0 102px; }
.marks i { width: 28px; height: 28px; border: 0 solid #c0c0c0; border-bottom-width: 1px; }
.marks .ml { border-right-width: 1px; }
.marks .mr { border-left-width: 1px; }
.para { display: flex; align-items: center; height: 19px; margin: 4px 0 0 129px; }
.ibeam { width: 2px; height: 19px; background: #000; }
.para svg { width: 7px; height: 7px; }

.vscroll { display: flex; flex-direction: column; grid-row: 1 / 3; grid-column: 3; padding-top: 1px; }
.split { height: 5px; border: 1px solid; border-color: #fff #000 #000 #fff; background: var(--face); }
.sb { display: flex; flex: none; align-items: center; justify-content: center; width: 16px; height: 16px; }
.sb svg { width: 7px; height: 7px; }
.view svg { width: 9px; height: 9px; }
.in { border-color: var(--dark) #fff #fff var(--dark); box-shadow: inset 1px 1px 0 var(--shade); }
.track { flex: 1; background: var(--dither); }
.thumb { height: 41.5%; }
.hscroll { display: flex; grid-row: 3; grid-column: 1 / 3; }
.hscroll .view + .sb:not(.view) { margin-left: 1px; }
.htrack { flex: 1; background: var(--dither); }
.hthumb { width: calc(100% - 1px); height: 16px; }

/* drawing bar and status bar */
.foot { height: 28px; padding-top: 1px; border-bottom: 1px solid var(--shade); }
.draw { width: 613px; }
.draw .sep { margin: 0 2px; }
.draw .low { margin-left: auto; }
.status { display: flex; flex: none; align-items: center; gap: 5px; height: 22px; padding: 0 0 0 5px; border-top: 1px solid #fff; }
.pane { display: flex; align-items: center; flex: none; height: 17px; border: 1px solid; border-color: var(--shade) #fff #fff var(--shade); line-height: 15px; }
.p1 { width: 234px; padding: 0 23px 0 44px; }
.sec { margin: 0 28px 0 auto; }
.p2 { width: 185px; gap: 22px; padding: 0 4px 0 3px; }
.pos { flex: 1; }
.s { width: 29px; justify-content: center; }
.lang { width: 65px; justify-content: center; }
.e1 { width: 44px; }
.e2 { width: 34px; }
.status .size { width: 14px; height: 14px; margin: 4px 0 0 auto; }
```
